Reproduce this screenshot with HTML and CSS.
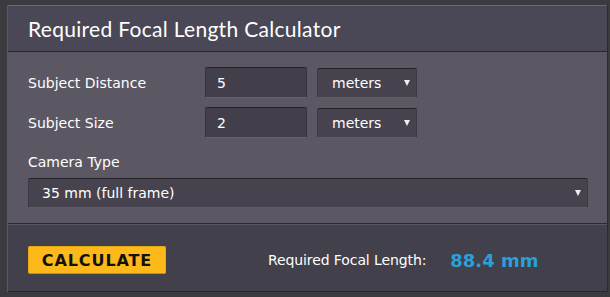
FILE: index.html
```html
<!doctype html>
<html>
<head>
<meta charset="utf-8">
<title>Required Focal Length Calculator</title>
<link rel="stylesheet" href="styles.css">
</head>
<body>
<div class="calc">
	<div class="calc_head">Required Focal Length Calculator</div>
	<div class="calc_body">
		<div class="row">
			<label class="lbl">Subject Distance</label>
			<input type="text" class="num" value="5">
			<div class="sel sel_small">
				<select><option>meters</option></select>
			</div>
		</div>
		<div class="row">
			<label class="lbl">Subject Size</label>
			<input type="text" class="num" value="2">
			<div class="sel sel_small">
				<select><option>meters</option></select>
			</div>
		</div>
		<div class="cam_lbl">Camera Type</div>
		<div class="sel sel_wide">
			<select><option>35 mm (full frame)</option></select>
		</div>
	</div>
	<div class="calc_foot">
		<a href="javascript:;" class="btn">CALCULATE</a>
		<span class="res_lbl">Required Focal Length:</span>
		<span class="res_val">88.4 mm</span>
	</div>
</div>
</body>
</html>
```

FILE: styles.css
```css
*{ margin:0; padding:0; box-sizing:border-box;}
body{ background:#3b3a3f; font-family:"DejaVu Sans", Verdana, sans-serif; color:#fff;}

.calc{ width:601px; margin:5px 0 0 7px; border-left:1px solid #5a5663; border-right:1px solid #2d2b32;}

.calc_head{ height:47px; background:#4a4756; border-top:1px solid #6a6674; border-bottom:1px solid #29272e; padding:0 0 0 20px; font-family:Lato, "Open Sans", sans-serif; font-size:21px; line-height:46px; letter-spacing:0.3px;}

.calc_body{ background:#5c5863; padding:15px 19px 15px 20px; border-bottom:1px solid #2c2a31;}
.row{ display:flex; align-items:center; margin-bottom:9px;}
.lbl{ width:177px; font-size:14px;}
.num{ width:102px; height:31px; background:#423f4b; border:1px solid #34323b; border-top-color:#25232a; border-bottom-color:#66626e; border-radius:2px; color:#fff; font-family:"DejaVu Sans", sans-serif; font-size:14px; padding:0 11px; outline:none;}

.sel{ position:relative; background:#46434f; border:1px solid #3a3842; border-top-color:#25232a; border-bottom-color:#5f5b67; border-radius:2px;}
.sel select{ -webkit-appearance:none; appearance:none; width:100%; height:100%; background:transparent; border:none; color:#fff; font-family:"DejaVu Sans", sans-serif; font-size:14px; outline:none;}
.sel:after{ content:''; position:absolute; top:50%; margin-top:-3px; border-left:3.5px solid transparent; border-right:3.5px solid transparent; border-top:6px solid #eee;}
.sel_small{ width:100px; height:30px; margin-left:10px;}
.sel_small select{ padding:0 0 0 14px;}
.sel_small:after{ right:6px;}

.cam_lbl{ font-size:14px; margin:16px 0 8px;}
.sel_wide{ width:560px; height:30px;}
.sel_wide select{ padding:0 0 0 13px;}
.sel_wide:after{ right:6px;}

.calc_foot{ height:68px; background:#42404a; border-top:1px solid #59555f; border-bottom:1px solid #29272e; display:flex; align-items:center; padding:4px 0 0 20px;}
.btn{ display:block; width:138px; height:28px; background:#fdb819; border:1px solid #e8a514; border-bottom-color:#c98d10; border-radius:2px; color:#111; text-decoration:none; font-weight:bold; font-size:16px; letter-spacing:0.9px; line-height:27px; text-align:center;}
.res_lbl{ margin-left:102px; font-size:14px; letter-spacing:-0.1px;}
.res_val{ margin-left:24px; color:#2b9fd9; font-weight:bold; font-size:18px;}
```
